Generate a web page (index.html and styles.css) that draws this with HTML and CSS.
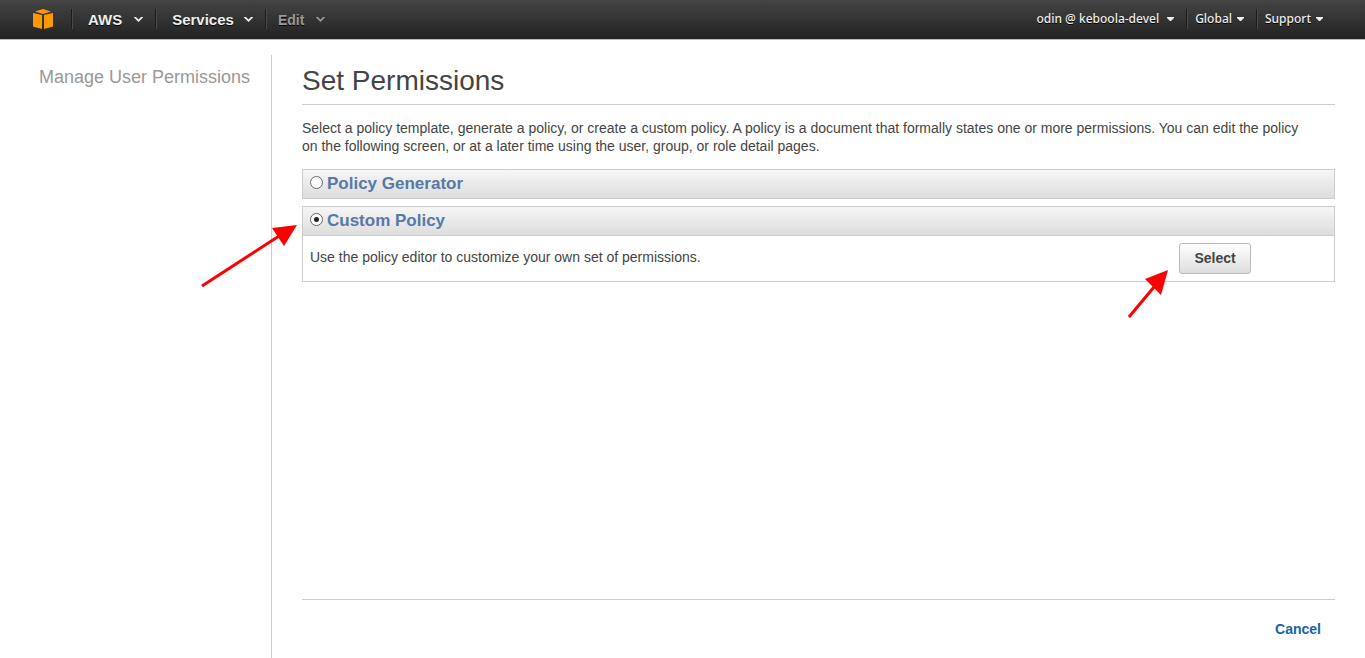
FILE: index.html
```
<!DOCTYPE html>
<html lang="en">
<head>
<meta charset="utf-8">
<title>Set Permissions</title>
<link rel="stylesheet" href="styles.css">
</head>
<body>
<header class="topbar">
  <nav class="menu" aria-label="Main">
    <a class="logo" href="#" aria-label="Console home">
      <svg width="20" height="20" viewBox="0 0 20 20" fill="#ff9900" aria-hidden="true">
        <path d="M2 2.500 10 0l8 2.500L10 5z"/>
        <path d="M0 4 9 6V20L0 17.500z"/>
        <path d="M20 4 11 6V20L20 17.500z"/>
      </svg>
    </a>
    <button class="item item-aws" type="button">AWS
      <svg class="chevron" width="9" height="5" viewBox="0 0 9 5" aria-hidden="true"><path d="M0 0h2l2.500 2.500L7 0h2v.5L4.500 5 0 .5z"/></svg>
    </button>
    <button class="item item-services" type="button">Services
      <svg class="chevron" width="9" height="5" viewBox="0 0 9 5" aria-hidden="true"><path d="M0 0h2l2.500 2.500L7 0h2v.5L4.500 5 0 .5z"/></svg>
    </button>
    <button class="item item-edit" type="button">Edit
      <svg class="chevron" width="9" height="5" viewBox="0 0 9 5" aria-hidden="true"><path d="M0 0h2l2.500 2.500L7 0h2v.5L4.500 5 0 .5z"/></svg>
    </button>
  </nav>
  <nav class="account" aria-label="Account">
    <button class="link link-user" type="button">odin @ keboola-devel
      <svg class="caret" width="7" height="4" viewBox="0 0 7 4" aria-hidden="true"><path d="M0 0h7v1L4 4H3L0 1z"/></svg>
    </button>
    <button class="link" type="button">Global
      <svg class="caret" width="7" height="4" viewBox="0 0 7 4" aria-hidden="true"><path d="M0 0h7v1L4 4H3L0 1z"/></svg>
    </button>
    <button class="link" type="button">Support
      <svg class="caret" width="7" height="4" viewBox="0 0 7 4" aria-hidden="true"><path d="M0 0h7v1L4 4H3L0 1z"/></svg>
    </button>
  </nav>
</header>
<div class="layout">
  <aside class="sidebar">Manage User Permissions</aside>
  <main class="content">
    <h1 class="title">Set Permissions</h1>
    <p class="intro">Select a policy template, generate a policy, or create a custom policy. A policy is a document that formally states one or more permissions. You can edit the policy on the following screen, or at a later time using the user, group, or role detail pages.</p>
    <section class="panel">
      <div class="panel-head">
        <input class="radio" type="radio" name="policy" id="generator">
        <label class="label" for="generator">Policy Generator</label>
      </div>
    </section>
    <section class="panel">
      <div class="panel-head">
        <input class="radio" type="radio" name="policy" id="custom" checked>
        <label class="label" for="custom">Custom Policy</label>
      </div>
      <div class="panel-body">
        <p class="hint">Use the policy editor to customize your own set of permissions.</p>
        <div class="action">
          <button class="select" type="button">Select</button>
          <svg class="arrow arrow-select" width="40" height="48" viewBox="0 0 40 48" aria-hidden="true"><path class="shaft" d="M1 47 26 17"/><path class="tip" d="M40 0 17 9l16 16z"/></svg>
        </div>
      </div>
      <svg class="arrow arrow-policy" width="96" height="62" viewBox="0 0 96 62" aria-hidden="true"><path class="shaft" d="M1 61 78 11"/><path class="tip" d="M96 0 71 3l12 18z"/></svg>
    </section>
    <footer class="footer"><a class="cancel" href="#">Cancel</a></footer>
  </main>
</div>
</body>
</html>
```

FILE: styles.css
```
* { box-sizing: border-box; }

body {
  margin: 0;
  min-height: 100vh;
  display: flex;
  flex-direction: column;
  background: #fff;
  color: #444;
  font: 14px/18px "Liberation Sans", Arial, sans-serif;
}

.topbar {
  display: flex;
  justify-content: space-between;
  align-items: center;
  height: 40px;
  padding: 0 32px 1px 33px;
  background: linear-gradient(#444, #222);
  border-bottom: 1px solid #bbb;
}

.menu, .account { display: flex; align-items: center; }

.logo { display: flex; margin-right: 18px; }

.item, .link {
  display: flex;
  align-items: center;
  height: 20px;
  padding: 0;
  border: 0;
  background: none;
  color: #eee;
  text-shadow: 0 1px 0 #000;
  white-space: nowrap;
}

.item {
  gap: 12px;
  padding: 1px 12px 0 16px;
  border-left: 1px solid #1c1c1c;
  box-shadow: inset 1px 0 0 #4a4a4a;
  font: bold 15px/20px "Liberation Sans", Arial, sans-serif;
}

.item-services { gap: 10px; }

.item-edit { padding-left: 12px; color: #999; font-size: 14px; }

.chevron { fill: currentColor; }

.link {
  gap: 5px;
  padding: 0 12px 0 8px;
  font: 500 12px/20px "Noto Sans", sans-serif;
}

.link-user { gap: 8px; }

.link + .link { border-left: 1px solid #1c1c1c; box-shadow: inset 1px 0 0 #4a4a4a; }

.caret { fill: currentColor; }

.layout { flex: 1; display: flex; padding-top: 15px; }

.link:last-child { padding-right: 10px; }

.sidebar {
  flex: 0 0 272px;
  padding: 11px 20px 0 39px;
  border-right: 1px solid #ccc;
  color: #999;
  font-size: 18px;
  line-height: 22px;
  white-space: nowrap;
}

.content {
  flex: 1;
  display: flex;
  flex-direction: column;
  padding: 10px 30px 0;
}

.title {
  margin: 0 0 14px;
  padding-bottom: 7px;
  border-bottom: 1px solid #ccc;
  font-size: 28px;
  line-height: 32px;
  font-weight: normal;
}

.intro { margin: 0 0 14px; padding-right: 24px; }

.panel {
  position: relative;
  margin-bottom: 7px;
  border: 1px solid #ccc;
}

.panel-head {
  display: flex;
  align-items: center;
  gap: 4px;
  height: 28px;
  padding-left: 7px;
  background: linear-gradient(#f6f6f6, #ddd);
}

.radio {
  appearance: none;
  width: 13px;
  height: 13px;
  margin: 0 0 4px;
  border: 1px solid #666;
  border-radius: 50%;
  background: #fff;
}

.radio:checked { background: radial-gradient(circle, #222 0 2px, #fff 3px); }

.label { color: #5779a8; font-size: 17px; line-height: 28px; font-weight: bold; }

.panel-body {
  display: flex;
  justify-content: space-between;
  align-items: flex-start;
  height: 46px;
  padding: 7px 83px 0 7px;
  border-top: 1px solid #ccc;
}

.hint { margin: 0; line-height: 28px; }

.action { position: relative; }

.select {
  display: block;
  width: 72px;
  height: 31px;
  padding: 0 0 2px;
  border: 1px solid #bbb;
  border-radius: 3px;
  background: linear-gradient(#fff, #ddd);
  color: #444;
  font: bold 14px/18px "Liberation Sans", Arial, sans-serif;
}

/* Pointers laid over the page */
.arrow { position: absolute; pointer-events: none; }
.arrow-select { right: 83px; top: 27px; }
.arrow-policy { right: calc(100% + 6px); top: 18px; }
.shaft { fill: none; stroke: #f00; stroke-width: 3; }
.tip { fill: #f00; }

.footer {
  display: flex;
  justify-content: flex-end;
  margin-top: auto;
  padding: 20px 14px;
  border-top: 1px solid #ccc;
}

.cancel { color: #1166aa; font-weight: bold; text-decoration: none; }
```
